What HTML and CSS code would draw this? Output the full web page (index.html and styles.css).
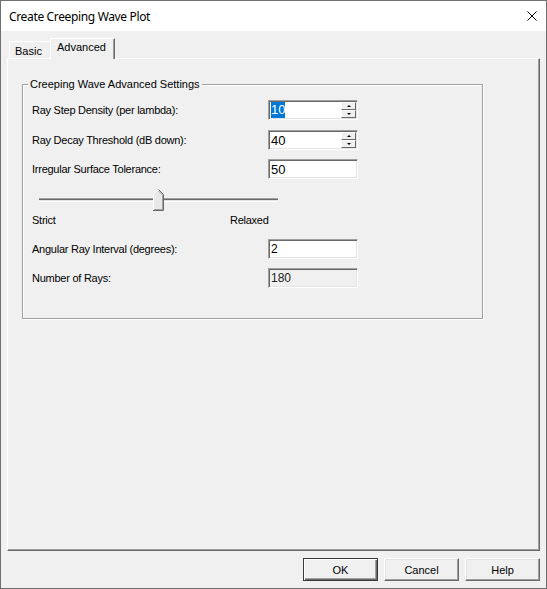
FILE: index.html
```html
<!DOCTYPE html>
<html>
<head>
<meta charset="utf-8">
<title>Create Creeping Wave Plot</title>
<link rel="stylesheet" href="styles.css">
</head>
<body>
<div class="window">
  <div class="titlebar">
    <span class="title">Create Creeping Wave Plot</span>
    <svg class="close" width="10" height="10" viewBox="0 0 10 10"><path d="M0.5 0.5 L9.5 9.5 M9.5 0.5 L0.5 9.5" stroke="#000" stroke-width="1" fill="none"/></svg>
  </div>
  <div class="body">
    <div class="tabctl">
      <div class="tabs">
        <div class="tab basic">Basic</div>
        <div class="tab active">Advanced</div>
      </div>
      <div class="panel">
        <fieldset class="group">
          <legend>Creeping Wave Advanced Settings</legend>
          <div class="content">
            <div class="row r1">
              <span class="label">Ray Step Density (per lambda):</span>
              <div class="field big"><span class="sel">10</span>
                <div class="spin"><div class="sb"><i class="up"></i></div><div class="sb"><i class="down"></i></div></div>
              </div>
            </div>
            <div class="row r2">
              <span class="label">Ray Decay Threshold (dB down):</span>
              <div class="field big"><span class="val">40</span>
                <div class="spin"><div class="sb"><i class="up"></i></div><div class="sb"><i class="down"></i></div></div>
              </div>
            </div>
            <div class="row r3">
              <span class="label">Irregular Surface Tolerance:</span>
              <div class="field big"><span class="val">50</span></div>
            </div>
            <div class="slider">
              <div class="track"></div>
              <svg class="thumb" width="11" height="22" viewBox="0 0 11 22">
                <polygon points="0.5,5.5 5.5,0.5 10.5,5.5 10.5,21.5 0.5,21.5" fill="#e8e8e8"/>
                <polyline points="0.5,21 0.5,5.5 5.5,0.5" fill="none" stroke="#ffffff"/>
                <polyline points="5.5,0.5 10.5,5.5 10.5,21.5 0,21.5" fill="none" stroke="#696969"/>
                <polyline points="5.5,2 9.5,6 9.5,20.5 1,20.5" fill="none" stroke="#a0a0a0"/>
              </svg>
              <div class="track"></div>
            </div>
            <div class="scale"><span class="strict">Strict</span><span>Relaxed</span></div>
            <div class="row r4">
              <span class="label">Angular Ray Interval (degrees):</span>
              <div class="field"><span class="val">2</span></div>
            </div>
            <div class="row r5">
              <span class="label">Number of Rays:</span>
              <div class="field disabled"><span class="val">180</span></div>
            </div>
          </div>
        </fieldset>
      </div>
    </div>
    <div class="buttons">
      <div class="btn default">OK</div>
      <div class="btn">Cancel</div>
      <div class="btn">Help</div>
    </div>
  </div>
</div>
</body>
</html>
```

FILE: styles.css
```css
html, body {
  margin: 0;
  padding: 0;
  background: #ffffff;
}
body {
  font-family: "Liberation Sans", Arial, sans-serif;
  font-size: 11px;
  letter-spacing: 0;
  color: #000;
}
.window {
  width: 547px;
  height: 589px;
  box-sizing: border-box;
  border: 1px solid #6f6f6f;
  display: flex;
  flex-direction: column;
  background: #f0f0f0;
}
.titlebar {
  height: 30px;
  flex: none;
  background: #ffffff;
  display: flex;
  align-items: center;
  justify-content: space-between;
  padding: 0 9px 0 8px;
}
.title {
  font-family: "Noto Sans", "Liberation Sans", sans-serif;
  font-size: 12px;
  letter-spacing: -0.35px;
  color: #000;
}
.close { display: block; }
.body {
  flex: 1;
  display: flex;
  flex-direction: column;
  padding: 7px 6px 7px 6px;
  min-height: 0;
}
.tabctl {
  flex: 1;
  display: flex;
  flex-direction: column;
}
.tabs {
  height: 20px;
  flex: none;
  display: flex;
  align-items: flex-end;
  padding-left: 2px;
}
.tab {
  box-sizing: border-box;
  border: 1px solid;
  border-bottom: none;
  border-color: #ffffff #696969 transparent #ffffff;
  box-shadow: inset -1px 0 0 #a0a0a0;
  line-height: 13px;
  background: #f0f0f0;
  white-space: nowrap;
}
.tab.basic {
  width: 43px;
  height: 17px;
  padding: 3px 0 0 5px;
}
.tab.active {
  position: relative;
  z-index: 1;
  width: 65px;
  height: 21px;
  margin-left: -2px;
  margin-bottom: -1px;
  padding: 2px 0 0 6px;
}
.panel {
  flex: 1;
  border: 1px solid;
  border-color: #ffffff #696969 #696969 #ffffff;
  box-shadow: inset -1px -1px 0 #a0a0a0;
  padding: 19px 0 0 14px;
}
.group {
  box-sizing: border-box;
  width: 461px;
  margin: 0;
  padding: 0;
  border: 1px solid #a0a0a0;
  box-shadow: 1px 1px 0 #ffffff, inset 1px 1px 0 #ffffff;
  min-width: 0;
}
.group legend {
  margin-left: 5px;
  padding: 0 2px;
  line-height: 13px;
  background: #f0f0f0;
}
.content {
  padding: 0 0 30px 9px;
}
.row {
  display: flex;
  align-items: center;
  height: 20px;
}
.r1 { margin-top: 9px; }
.r2 { margin-top: 10px; }
.r3 { margin-top: 9px; }
.r4 { margin-top: 12px; }
.r5 { margin-top: 9px; }
.label {
  width: 236px;
  flex: none;
  letter-spacing: -0.25px;
}
.field {
  box-sizing: border-box;
  width: 90px;
  height: 20px;
  border: 1px solid;
  border-color: #a0a0a0 #ffffff #ffffff #a0a0a0;
  box-shadow: inset 1px 1px 0 #696969, inset -1px -1px 0 #e3e3e3;
  background: #ffffff;
  display: flex;
  align-items: center;
  padding: 1px;
  font-size: 12px;
}
.field.big { font-size: 13px; }
.field .val { padding-left: 1px; }
.field.disabled {
  background: #f0f0f0;
  color: #222;
}
.sel {
  display: inline-block;
  margin-left: 1px;
  background: #0078d7;
  color: #ffffff;
  line-height: 16px;
}
.spin {
  margin-left: auto;
  width: 15px;
  height: 16px;
  display: flex;
  flex-direction: column;
}
.sb {
  box-sizing: border-box;
  height: 8px;
  background: #f0f0f0;
  border: 1px solid;
  border-color: #ffffff #696969 #696969 #ffffff;
  display: flex;
  align-items: center;
  justify-content: center;
}
.sb i {
  display: block;
  width: 0;
  height: 0;
  border-left: 2px solid transparent;
  border-right: 2px solid transparent;
}
.sb i.up { border-bottom: 2px solid #000; }
.sb i.down { border-top: 2px solid #000; }
.slider {
  display: flex;
  align-items: flex-start;
  height: 22px;
  margin-top: 10px;
  padding-left: 7px;
}
.track {
  width: 114px;
  height: 4px;
  margin-top: 9px;
  background: linear-gradient(#a0a0a0 0 1px, #696969 1px 2px, #e3e3e3 2px 3px, #ffffff 3px 4px);
}
.thumb { display: block; flex: none; }
.scale {
  display: flex;
  height: 13px;
  line-height: 13px;
  margin-top: 3px;
  letter-spacing: -0.25px;
}
.strict {
  width: 198px;
}
.buttons {
  flex: none;
  display: flex;
  justify-content: flex-end;
  gap: 6px;
  margin-top: 7px;
}
.btn {
  box-sizing: border-box;
  width: 75px;
  height: 23px;
  display: flex;
  align-items: center;
  justify-content: center;
  border: 1px solid;
  border-color: #ffffff #696969 #696969 #ffffff;
  box-shadow: inset -1px -1px 0 #a0a0a0, inset 1px 1px 0 #e3e3e3;
  background: #f0f0f0;
}
.btn.default {
  border: 1px solid #3a3a3a;
  box-shadow: inset 1px 1px 0 #ffffff, inset -1px -1px 0 #696969, inset -2px -2px 0 #a0a0a0;
}
```
